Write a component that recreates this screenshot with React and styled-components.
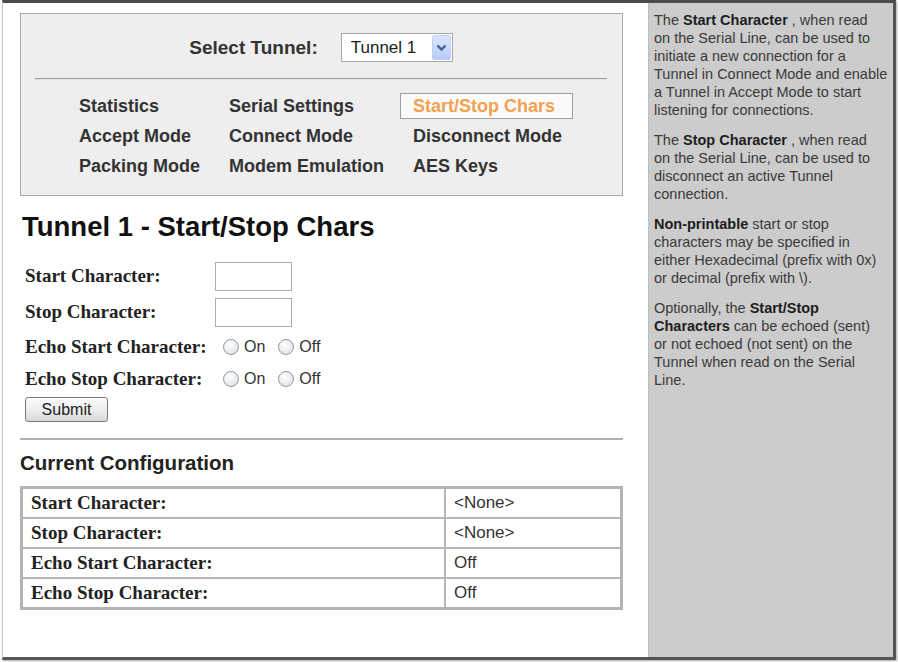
import React from "react";
import styled, { createGlobalStyle } from "styled-components";

const GlobalStyle = createGlobalStyle`
  html, body {
    margin: 0;
    padding: 0;
    background: #fff;
  }
  body {
    font-family: "Liberation Sans", Arial, sans-serif;
  }
`;

const Frame = styled.div`
  width: 898px;
  height: 662px;
  overflow: hidden;
  background: #fff;
`;

const Window = styled.div`
  box-sizing: border-box;
  width: 894px;
  height: 660px;
  margin-left: 2px;
  border-top: 3px solid #4b4b4b;
  border-right: 3px solid #555;
  border-bottom: 3px solid #555;
  border-left: 1px solid #c9c9c9;
  box-shadow: 1px 1px 2px rgba(0, 0, 0, 0.35);
  display: grid;
  grid-template-columns: 1fr 245px;
`;

const Main = styled.main`
  padding: 10px 25px 0 17px;
  min-width: 0;
`;

const NavBox = styled.div`
  border: 1px solid #a9a9a9;
  background: #eeeeee;
  padding: 0 15px 14px 14px;
`;

const SelectRow = styled.div`
  display: flex;
  justify-content: center;
  align-items: center;
  gap: 23px;
  padding-top: 19px;
`;

const SelectLabel = styled.label`
  font-weight: bold;
  font-size: 19px;
  color: #333;
`;

const SelectWrap = styled.div`
  position: relative;
  width: 112px;
  height: 29px;
`;

const NativeSelect = styled.select`
  appearance: none;
  box-sizing: border-box;
  width: 100%;
  height: 100%;
  border: 1px solid #a4a8ad;
  background: #fff;
  padding: 0 0 0 9px;
  font-family: "Liberation Sans", Arial, sans-serif;
  font-size: 17px;
  color: #222;
  outline: none;
`;

const SelectArrow = styled.span`
  position: absolute;
  right: 2px;
  top: 2px;
  box-sizing: border-box;
  width: 19px;
  height: 25px;
  border: 1px solid #c3d1f3;
  border-radius: 2px;
  background: linear-gradient(#dce7fd, #b6cbf7);
  display: flex;
  align-items: center;
  justify-content: center;
  pointer-events: none;
`;

const Divider = styled.hr`
  margin: 16px 0 0;
  height: 0;
  border: 0;
  border-top: 1px solid #9c9c9c;
  border-bottom: 1px solid #e2e2e2;
`;

const NavGrid = styled.nav`
  display: grid;
  grid-template-columns: repeat(3, auto);
  justify-content: start;
  column-gap: 29px;
  grid-auto-rows: 30px;
  align-items: center;
  margin: 11px 0 0 44px;
`;

const NavLink = styled.a`
  justify-self: start;
  font-weight: bold;
  font-size: 18px;
  text-decoration: none;
  white-space: nowrap;
  color: ${(p) => (p.$active ? "#f2a24e" : "#333")};
  ${(p) =>
    p.$active &&
    `
    box-sizing: border-box;
    height: 26px;
    line-height: 24px;
    margin-left: -13px;
    padding: 0 17px 0 12px;
    border: 1px solid #a0a0a0;
    background: #fafafa;
  `}
`;

const Title = styled.h2`
  margin: 15px 0 0 2px;
  font-size: 27.5px;
  line-height: 31px;
  font-weight: bold;
  color: #111;
`;

const Form = styled.form`
  margin-top: 16px;
  padding-left: 5px;
`;

const FieldRow = styled.div`
  display: grid;
  grid-template-columns: 190px auto;
  align-items: center;
  height: ${(p) => p.$h}px;
`;

const FieldLabel = styled.label`
  font-family: "Liberation Serif", "Times New Roman", serif;
  font-weight: bold;
  font-size: 19px;
  color: #222;
  white-space: nowrap;
`;

const TextInput = styled.input`
  box-sizing: border-box;
  width: 77px;
  height: 29px;
  border: 1px solid #a7adb3;
  margin: 0;
`;

const RadioGroup = styled.div`
  display: flex;
  align-items: center;
`;

const Radio = styled.input`
  appearance: none;
  box-sizing: border-box;
  width: 16px;
  height: 16px;
  margin: 0 5px 0 8px;
  border-radius: 50%;
  border: 1px solid #8f9ca8;
  background: radial-gradient(circle at 40% 35%, #ffffff, #d8dadc);
`;

const RadioText = styled.span`
  font-size: 16px;
  color: #333;
  margin-right: 5px;
`;

const SubmitButton = styled.button`
  width: 83px;
  height: 25px;
  margin-top: 2px;
  padding: 0;
  border: 1px solid #6f7c88;
  border-radius: 3px;
  background: linear-gradient(#fcfcfc, #ececec 55%, #d8d8d8);
  font-family: "Liberation Sans", Arial, sans-serif;
  font-size: 16px;
  color: #222;
`;

const Rule = styled.hr`
  margin: 16px 0 0;
  height: 0;
  border: 0;
  border-top: 2px solid #b0b0b0;
`;

const SectionTitle = styled.h3`
  margin: 11px 0 0;
  font-size: 20.5px;
  line-height: 24px;
  font-weight: bold;
  color: #222;
`;

const ConfigTable = styled.table`
  margin-top: 11px;
  width: 100%;
  border-collapse: collapse;
  border: 3px solid #b3b3b3;
`;

const Cell = styled.td`
  border: 2px solid #b6b6b6;
  height: 28px;
  padding: 0 8px;
  ${(p) =>
    p.$head
      ? `
    width: 405px;
    font-family: "Liberation Serif", "Times New Roman", serif;
    font-weight: bold;
    font-size: 19px;
    color: #222;
  `
      : `
    font-size: 17px;
    color: #333;
  `}
`;

const Aside = styled.aside`
  background: #cccccc;
  border-left: 1px solid #bdbdbd;
  padding: 8px 2px 0 5px;
  font-size: 14.5px;
  line-height: 18px;
  color: #3a3a3a;
  white-space: nowrap;

  p {
    margin: 0 0 12px;
  }
  b {
    color: #1c1c1c;
  }
`;

const links = [
  ["Statistics"],
  ["Serial Settings"],
  ["Start/Stop Chars", true],
  ["Accept Mode"],
  ["Connect Mode"],
  ["Disconnect Mode"],
  ["Packing Mode"],
  ["Modem Emulation"],
  ["AES Keys"],
];

const config = [
  ["Start Character:", "<None>"],
  ["Stop Character:", "<None>"],
  ["Echo Start Character:", "Off"],
  ["Echo Stop Character:", "Off"],
];

function EchoRow({ label, name, h }) {
  return (
    <FieldRow $h={h}>
      <FieldLabel>{label}</FieldLabel>
      <RadioGroup>
        <Radio type="radio" name={name} value="on" />
        <RadioText>On</RadioText>
        <Radio type="radio" name={name} value="off" />
        <RadioText>Off</RadioText>
      </RadioGroup>
    </FieldRow>
  );
}

export default function App() {
  return (
    <Frame>
      <GlobalStyle />
      <Window>
        <Main>
          <NavBox>
            <SelectRow>
              <SelectLabel>Select Tunnel:</SelectLabel>
              <SelectWrap>
                <NativeSelect defaultValue="1">
                  <option value="1">Tunnel 1</option>
                  <option value="2">Tunnel 2</option>
                </NativeSelect>
                <SelectArrow aria-hidden="true">
                  <svg width="11" height="9" viewBox="0 0 11 9">
                    <path
                      d="M1.5 2.5 L5.5 6.5 L9.5 2.5"
                      fill="none"
                      stroke="#4a5f8c"
                      strokeWidth="2.4"
                    />
                  </svg>
                </SelectArrow>
              </SelectWrap>
            </SelectRow>
            <Divider />
            <NavGrid>
              {links.map(([text, active]) => (
                <NavLink key={text} href="#" $active={active}>
                  {text}
                </NavLink>
              ))}
            </NavGrid>
          </NavBox>

          <Title>Tunnel 1 - Start/Stop Chars</Title>

          <Form onSubmit={(e) => e.preventDefault()}>
            <FieldRow $h={36}>
              <FieldLabel>Start Character:</FieldLabel>
              <TextInput type="text" />
            </FieldRow>
            <FieldRow $h={36}>
              <FieldLabel>Stop Character:</FieldLabel>
              <TextInput type="text" />
            </FieldRow>
            <EchoRow label="Echo Start Character:" name="echoStart" h={33} />
            <EchoRow label="Echo Stop Character:" name="echoStop" h={32} />
            <SubmitButton type="submit">Submit</SubmitButton>
          </Form>

          <Rule />
          <SectionTitle>Current Configuration</SectionTitle>
          <ConfigTable>
            <tbody>
              {config.map(([k, v]) => (
                <tr key={k}>
                  <Cell $head>{k}</Cell>
                  <Cell>{v}</Cell>
                </tr>
              ))}
            </tbody>
          </ConfigTable>
        </Main>

        <Aside>
          <p>
            The <b>Start Character</b> , when read
            <br />
            on the Serial Line, can be used to
            <br />
            initiate a new connection for a
            <br />
            Tunnel in Connect Mode and enable
            <br />
            a Tunnel in Accept Mode to start
            <br />
            listening for connections.
          </p>
          <p>
            The <b>Stop Character</b> , when read
            <br />
            on the Serial Line, can be used to
            <br />
            disconnect an active Tunnel
            <br />
            connection.
          </p>
          <p>
            <b>Non-printable</b> start or stop
            <br />
            characters may be specified in
            <br />
            either Hexadecimal (prefix with 0x)
            <br />
            or decimal (prefix with \).
          </p>
          <p>
            Optionally, the <b>Start/Stop</b>
            <br />
            <b>Characters</b> can be echoed (sent)
            <br />
            or not echoed (not sent) on the
            <br />
            Tunnel when read on the Serial
            <br />
            Line.
          </p>
        </Aside>
      </Window>
    </Frame>
  );
}
